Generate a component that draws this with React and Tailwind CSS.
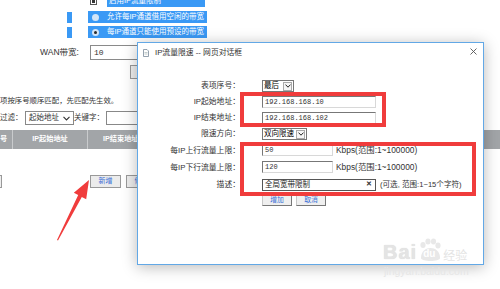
import React from "react";

const BLUE = "bg-[#3a99f5]";

function Radio({ checked }) {
  return (
    <div className="ml-[4px] flex h-[7px] w-[7px] items-center justify-center rounded-full bg-[#d3e5f7]">
      {checked ? <div className="h-[3px] w-[3px] rounded-full bg-[#2a2a2a]" /> : null}
    </div>
  );
}

function Background() {
  return (
    <div className="flex flex-col text-[#333]">
      <div className="-mt-[5px] flex h-[12px] items-center pl-[90px]">
        <div className="flex h-[7px] w-[7px] items-center justify-center border border-[#555] bg-white">
          <div className="h-[3px] w-[3px] bg-[#333]" />
        </div>
        <div className={`ml-[10px] h-[12px] w-[98px] ${BLUE} pl-[2px] text-[7.5px] leading-[12px] text-white`}>启用IP流量限制</div>
      </div>
      <div className="mt-[4px] flex h-[12px] items-center pl-[67px]">
        <div className={`h-[11px] w-[5px] ${BLUE}`} />
        <div className={`ml-[16px] flex h-[12px] w-[119px] items-center ${BLUE}`}>
          <Radio />
          <span className="ml-[8px] text-[7.5px] leading-none text-white">允许每IP通道借用空闲的带宽</span>
        </div>
      </div>
      <div className="mt-[3px] flex h-[12px] items-center pl-[67px]">
        <div className={`h-[11px] w-[5px] ${BLUE}`} />
        <div className={`ml-[16px] flex h-[12px] w-[119px] items-center ${BLUE}`}>
          <Radio checked />
          <span className="ml-[8px] text-[7.5px] leading-none text-white">每IP通道只能使用预设的带宽</span>
        </div>
      </div>
      <div className="mt-[7px] flex h-[15px] items-center">
        <div className="w-[79px] text-right text-[8.5px]">WAN带宽:</div>
        <div className="ml-[11px] flex h-[15px] w-[70px] items-center border border-[#8a8a8a] bg-white pl-[3px] font-['Liberation_Mono',monospace] text-[8px]">10</div>
      </div>
      <div className="mt-[5px] flex h-[14px] items-center pl-[130px]">
        <div className="h-[14px] w-[30px] border border-[#999] bg-[#efefef]" />
      </div>
      <div className="mt-[16px] h-[11px] text-[7.4px] leading-[11px]">项按序号顺序匹配，先匹配先生效。</div>
      <div className="mt-[5px] flex h-[14px] items-center text-[7.5px]">
        <span className="w-[25px]">过滤：</span>
        <div className="flex h-[14px] w-[49px] items-center justify-between border border-[#888] bg-white px-[3px]">
          <span>起始地址</span>
          <svg width="7" height="5" viewBox="0 0 7 5"><path d="M0.5 0.8 L3.5 4 L6.5 0.8" fill="none" stroke="#333" strokeWidth="1.1" /></svg>
        </div>
        <span className="w-[32px]">关键字：</span>
        <div className="h-[14px] w-[40px] border border-[#888] bg-white" />
      </div>
      <div className="mt-[5px] flex h-[19px] items-stretch bg-[#a2a5a8] text-[7.2px] font-bold text-white">
        <div className="flex w-[12px] items-center">号</div>
        <div className="w-px bg-[#c9cbcd]" />
        <div className="flex w-[74px] items-center justify-center">IP起始地址</div>
        <div className="w-px bg-[#c9cbcd]" />
        <div className="flex w-[100px] items-center pl-[15px]">IP结束地址</div>
      </div>
      <div className="mt-[26px] flex h-[13px] items-center">
        <div className="h-[13px] w-[2px] border border-l-0 border-[#999] bg-[#eee]" />
        <div className="ml-[88px] flex h-[13px] w-[31px] items-center justify-center border border-[#999] bg-[#ececec] text-[7px] text-[#3b6fd6]">新增</div>
        <div className="ml-[5px] flex h-[13px] w-[31px] items-center justify-center border border-[#999] bg-[#ececec] text-[7px] text-[#3b6fd6]">修改</div>
      </div>
    </div>
  );
}

function Input({ w, children, dark }) {
  const cls = dark
    ? "border-[#555]"
    : "border-t-[#777] border-l-[#777] border-r-[#d8d8d8] border-b-[#d8d8d8]";
  return (
    <div className={`flex h-[12px] items-center border bg-white pl-[2px] ${cls} ${w}`}>{children}</div>
  );
}

function Select({ w, text }) {
  return (
    <div className={`flex h-[12px] items-center justify-between border border-[#777] bg-white pl-[1px] text-[7.5px] ${w}`}>
      <span className="leading-none">{text}</span>
      <div className="mr-[1px] flex h-[9px] w-[9px] items-center justify-center border border-[#aaa] bg-[#f6f6f6]">
        <svg width="6" height="4" viewBox="0 0 6 4"><path d="M0.5 0.6 L3 3.2 L5.5 0.6" fill="none" stroke="#222" strokeWidth="1" /></svg>
      </div>
    </div>
  );
}

function Row({ label, h, children }) {
  return (
    <div className={`flex items-center ${h}`}>
      <div className="w-[102px] text-right text-[7.8px] text-[#333]">{label}</div>
      <div className="ml-[22px] flex items-center">{children}</div>
    </div>
  );
}

const MONO = "font-['Liberation_Mono',monospace] text-[7px] text-[#333]";

function Dialog() {
  return (
    <div className="absolute left-[137px] top-[42px] h-[223px] w-[347px] border border-[#62a8e6] bg-white shadow-[0_2px_14px_rgba(0,0,0,0.28)]">
      <div className="relative flex h-[19px] items-center pl-[5px]">
        <svg width="6" height="8" viewBox="0 0 6 8">
          <path d="M0.5 0.5 H4 L5.5 2 V7.5 H0.5 Z" fill="#fff" stroke="#7a8a9a" strokeWidth="0.8" />
          <path d="M1.5 3.5 H4.5 M1.5 5 H4.5" stroke="#9aa" strokeWidth="0.6" />
        </svg>
        <span className="ml-[6px] text-[7.8px] text-[#333]">IP流量限速 -- 网页对话框</span>
        <svg className="absolute right-[6px] top-[5px]" width="7" height="7" viewBox="0 0 7 7">
          <path d="M0.5 0.5 L6.5 6.5 M6.5 0.5 L0.5 6.5" stroke="#555" strokeWidth="0.9" />
        </svg>
      </div>
      <div className="mt-[16px] flex flex-col">
        <Row label="表项序号：" h="h-[16px]">
          <Select w="w-[32px]" text="最后" />
        </Row>
        <Row label="IP起始地址：" h="h-[16px]">
          <Input w="w-[114px]"><span className={MONO}>192.168.168.10</span></Input>
        </Row>
        <Row label="IP结束地址：" h="h-[16px]">
          <Input w="w-[114px]"><span className={MONO}>192.168.168.102</span></Input>
        </Row>
        <Row label="限速方向：" h="h-[16px]">
          <Select w="w-[45px]" text="双向限速" />
        </Row>
        <Row label="每IP上行流量上限：" h="h-[17px]">
          <Input w="w-[71px]"><span className={MONO}>50</span></Input>
          <span className="ml-[3px] text-[8.4px] text-[#333]">Kbps(范围:1~100000)</span>
        </Row>
        <Row label="每IP下行流量上限：" h="h-[17px]">
          <Input w="w-[71px]"><span className={MONO}>120</span></Input>
          <span className="ml-[3px] text-[8.4px] text-[#333]">Kbps(范围:1~100000)</span>
        </Row>
        <Row label="描述：" h="h-[17px]">
          <Input w="w-[114px] justify-between pr-[3px]" dark>
            <span className="text-[7.5px] text-[#222]">全局宽带限制</span>
            <span className="text-[7px] font-bold text-[#333]">✕</span>
          </Input>
          <span className="ml-[4px] text-[7.6px] text-[#333]">(可选, 范围:1~15个字符)</span>
        </Row>
        <div className="mt-[2px] flex pl-[124px]">
          <div className="flex h-[11px] w-[30px] items-center justify-center border border-[#c8c8c8] border-b-[#777] border-r-[#777] bg-[#efefef] text-[6.8px] text-[#3b6fd6]">增加</div>
          <div className="ml-[4px] flex h-[11px] w-[30px] items-center justify-center border border-[#c8c8c8] border-b-[#777] border-r-[#777] bg-[#efefef] text-[6.8px] text-[#3b6fd6]">取消</div>
        </div>
      </div>
    </div>
  );
}

function Annotations() {
  return (
    <>
      <div className="absolute left-[240px] top-[92px] h-[35px] w-[146px] border-[4px] border-[#f03c3c]" />
      <div className="absolute left-[240px] top-[142px] h-[54px] w-[236px] border-[4px] border-[#f03c3c]" />
      <svg className="absolute left-0 top-0" width="500" height="289" viewBox="0 0 500 289">
        <polygon
          points="57,240 78.2,195 73.8,192.7 89,180 86.2,199.3 81.8,197 58,240.5"
          fill="#f03c3c"
        />
      </svg>
      <div className="absolute left-[383px] top-[238px] flex items-end text-[#e4e4e4]">
        <span className="text-[20px] font-bold leading-none tracking-[1px] [text-shadow:0_0_1px_#d4d4d4]">Bai</span>
        <div className="relative ml-[1px] h-[24px] w-[24px]">
          <svg width="24" height="24" viewBox="0 0 24 24">
            <ellipse cx="5" cy="7" rx="2.6" ry="3" fill="#e8e8e8" />
            <ellipse cx="10" cy="3.5" rx="2.6" ry="3" fill="#e8e8e8" />
            <ellipse cx="15.5" cy="3.5" rx="2.6" ry="3" fill="#e8e8e8" />
            <ellipse cx="20" cy="7.5" rx="2.6" ry="3" fill="#e8e8e8" />
            <path d="M3 20 C3 13 8 10 12.5 10 C17 10 22 13 22 20 C22 24 3 24 3 20 Z" fill="#e8e8e8" />
          </svg>
          <span className="absolute left-[5px] top-[11px] text-[10px] font-bold leading-none text-white">du</span>
        </div>
        <span className="ml-[1px] text-[12px] leading-none text-[#e4e4e4]">经验</span>
      </div>
      <div className="absolute left-[384px] top-[266px] text-[10.5px] leading-none text-[#e6e6e6]">jingyan.baidu.com</div>
    </>
  );
}

export default function App() {
  return (
    <div className="relative h-[289px] w-[500px] overflow-hidden bg-white font-['Liberation_Sans','Noto_Sans_CJK_SC',sans-serif]">
      <Background />
      <Dialog />
      <Annotations />
    </div>
  );
}
